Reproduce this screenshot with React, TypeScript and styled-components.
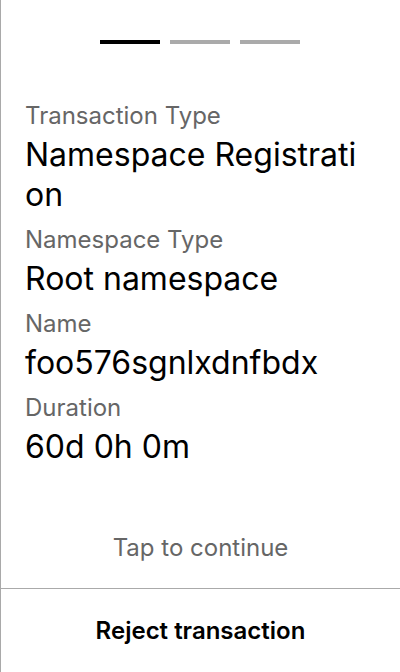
import React from "react";
import styled, { createGlobalStyle } from "styled-components";

const GlobalStyle = createGlobalStyle`
  html, body {
    margin: 0;
    padding: 0;
    background: #ffffff;
  }
  body {
    font-family: Inter, "Noto Sans", sans-serif;
    -webkit-font-smoothing: antialiased;
  }
  * { box-sizing: border-box; }
`;

const Screen = styled.div`
  height: 672px;
  width: 400px;
  display: flex;
  flex-direction: column;
  border-left: 1px solid #a9a9a9;
  background: #ffffff;
  overflow: hidden;
`;

const Progress = styled.div`
  display: flex;
  justify-content: center;
  gap: 10px;
  padding-top: 40px;
  padding-right: 1px;
`;

const Step = styled.div<{ $active?: boolean }>`
  width: 60px;
  height: 4px;
  background: ${(p) => (p.$active ? "#000000" : "#aaaaaa")};
`;

const Details = styled.div`
  display: flex;
  flex-direction: column;
  padding: 57px 30px 0 24px;
`;

const Label = styled.div`
  font-size: 24px;
  line-height: 29px;
  color: #666666;
  margin-bottom: 5px;
`;

const Value = styled.div`
  font-size: 32px;
  line-height: 40px;
  color: #000000;
  word-break: break-all;
  margin-bottom: 10px;
`;

const Spacer = styled.div`
  flex: 1;
`;

const Hint = styled.div`
  text-align: center;
  font-size: 24px;
  line-height: 29px;
  color: #666666;
  padding-bottom: 26px;
`;

const Divider = styled.div`
  height: 1px;
  background: #aaaaaa;
`;

const RejectButton = styled.button`
  height: 83px;
  border: none;
  background: transparent;
  font-family: Inter, "Noto Sans", sans-serif;
  font-size: 24px;
  font-weight: 600;
  color: #000000;
  padding: 0;
  cursor: pointer;
`;

const rows = [
  { label: "Transaction Type", value: "Namespace Registration" },
  { label: "Namespace Type", value: "Root namespace" },
  { label: "Name", value: "foo576sgnlxdnfbdx" },
  { label: "Duration", value: "60d 0h 0m" },
];

export default function App() {
  return (
    <>
      <GlobalStyle />
      <Screen>
        <Progress>
          <Step $active />
          <Step />
          <Step />
        </Progress>
        <Details>
          {rows.map((r) => (
            <React.Fragment key={r.label}>
              <Label>{r.label}</Label>
              <Value>{r.value}</Value>
            </React.Fragment>
          ))}
        </Details>
        <Spacer />
        <Hint>Tap to continue</Hint>
        <Divider />
        <RejectButton>Reject transaction</RejectButton>
      </Screen>
    </>
  );
}
